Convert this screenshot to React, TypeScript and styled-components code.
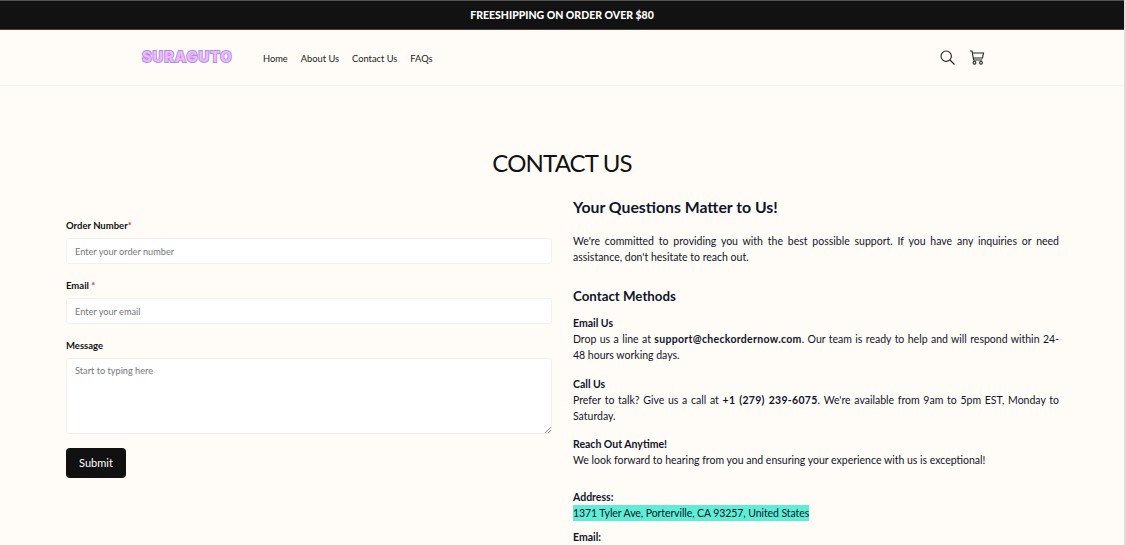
import React from "react";
import styled, { createGlobalStyle } from "styled-components";

const Global = createGlobalStyle`
  html, body { margin: 0; padding: 0; background: #fffcf7; overflow: hidden; }
  body { font-family: "Lato", "Noto Sans", sans-serif; color: #111; }
  * { box-sizing: border-box; }
`;
const Page = styled.div`width: 1126px; height: 545px; overflow: hidden; background: #fffcf7; border-right: 2px solid #dcdcdc;`;
const Announce = styled.div`
  height: 30px; background: #121212; border-top: 1px solid #555; border-bottom: 1px solid #444;
  color: #fff; font-weight: 900; font-size: 10.5px;
  display: flex; align-items: center; justify-content: center;
`;
const Header = styled.header`
  height: 56px; border-bottom: 1px solid #f6f3ee; display: flex; align-items: center;
  padding: 0 139px 0 142px;
`;
const Logo = styled.div`
  font-family: "Inter", sans-serif; font-weight: 800; font-size: 14.5px; letter-spacing: 1.05px;
  color: #f6b6f2; -webkit-text-stroke: 1.8px #a193f2; paint-order: stroke fill; width: 121px; padding-bottom: 2px;
`;
const Nav = styled.nav`display: flex; gap: 13px; padding-top: 2px;`;
const NavLink = styled.a`font-size: 9.3px; color: #222;`;
const Icons = styled.div`margin-left: auto; display: flex; gap: 14px; align-items: center;`;
const Title = styled.h1`
  margin: 62px 0 0; text-align: center; font-weight: 400; font-size: 24px; letter-spacing: -0.85px; line-height: 30px; color: #111;
`;
const Columns = styled.div`display: grid; grid-template-columns: 486px 486px; gap: 21px; padding: 0 0 0 66px; margin-top: 20px;`;
const Form = styled.form`display: flex; flex-direction: column; padding-top: 20.5px;`;
const Label = styled.label`font-size: 9.5px; font-weight: 700; color: #111; line-height: 14px; margin-bottom: 5.5px;`;
const Star = styled.span`color: #e0304a;`;
const Input = styled.div`
  height: 26px; background: #fff; border: 1px solid #f4f1ec; border-radius: 3px; margin-bottom: 14.5px;
  font-size: 9.2px; color: #777; display: flex; align-items: center; padding: 0 8px;
`;
const TextArea = styled.div`
  position: relative; height: 76px; background: #fff; border: 1px solid #f4f1ec; border-radius: 3px; margin-bottom: 14px;
  font-size: 9.2px; color: #777; padding: 6px 8px;
`;
const Grip = styled.svg`position: absolute; right: 0; bottom: 0;`;
const Submit = styled.button`
  width: 60px; height: 30px; background: #111; color: #fff; border: 0; border-radius: 4px;
  font-family: "Lato", sans-serif; font-size: 11px; padding: 0 0 2px;
`;
const Info = styled.div`color: #10142a;`;
const H2 = styled.h2`margin: 0 0 17px; font-size: 15.8px; font-weight: 700; line-height: 18px;`;
const H3 = styled.h3`margin: 23px 0 11px; font-size: 13.3px; font-weight: 700; line-height: 16px;`;
const P = styled.p<{ $gap?: number }>`
  margin: 0 0 ${(p) => p.$gap ?? 13}px; font-size: 10.5px; line-height: 16px; text-align: justify;
`;
const Lead = styled.span`font-weight: 700; display: block;`;
const Strong = styled.b`font-weight: 700; letter-spacing: 0.3px;`;
const Mark = styled.span`background: #5eeed6; display: inline-block; letter-spacing: -0.08px;`;

export default function App() {
  return (
    <Page>
      <Global />
      <Announce>FREESHIPPING ON ORDER OVER $80</Announce>
      <Header>
        <Logo>SURAGUTO</Logo>
        <Nav>
          <NavLink>Home</NavLink>
          <NavLink>About Us</NavLink>
          <NavLink>Contact Us</NavLink>
          <NavLink>FAQs</NavLink>
        </Nav>
        <Icons>
          <svg width="15" height="15" viewBox="0 0 15 15" fill="none" stroke="#222" strokeWidth="1.1">
            <circle cx="6.2" cy="6.2" r="5.2" />
            <path d="M10 10l4.5 4.5" />
          </svg>
          <svg width="16" height="15" viewBox="0 0 16 15" fill="none" stroke="#222" strokeWidth="1.1">
            <path d="M1 1h2l1.6 9h8.6M3.4 3h11.1l-1 5H4.3" />
            <circle cx="5.5" cy="12.7" r="1.4" />
            <circle cx="12" cy="12.7" r="1.4" />
          </svg>
        </Icons>
      </Header>
      <Title>CONTACT US</Title>
      <Columns>
        <Form>
          <Label>Order Number<Star>*</Star></Label>
          <Input>Enter your order number</Input>
          <Label>Email <Star>*</Star></Label>
          <Input>Enter your email</Input>
          <Label>Message</Label>
          <TextArea>
            Start to typing here
            <Grip width="6" height="6" viewBox="0 0 6 6" stroke="#666" strokeWidth="0.8"><path d="M0 6L6 0M3 6l3-3" /></Grip>
          </TextArea>
          <Submit type="button">Submit</Submit>
        </Form>
        <Info>
          <H2>Your Questions Matter to Us!</H2>
          <P>We're committed to providing you with the best possible support. If you have any inquiries or need assistance, don't hesitate to reach out.</P>
          <H3>Contact Methods</H3>
          <P $gap={13}><Lead>Email Us</Lead>Drop us a line at <Strong>support@checkordernow.com</Strong>. Our team is ready to help and will respond within 24-48 hours working days.</P>
          <P $gap={12}><Lead>Call Us</Lead>Prefer to talk? Give us a call at <Strong>+1 (279) 239-6075</Strong>. We're available from 9am to 5pm EST, Monday to Saturday.</P>
          <P $gap={21}><Lead>Reach Out Anytime!</Lead>We look forward to hearing from you and ensuring your experience with us is exceptional!</P>
          <P $gap={8}><Lead>Address:</Lead><Mark>1371 Tyler Ave, Porterville, CA 93257, United States</Mark></P>
          <P><Lead>Email:</Lead></P>
        </Info>
      </Columns>
    </Page>
  );
}
